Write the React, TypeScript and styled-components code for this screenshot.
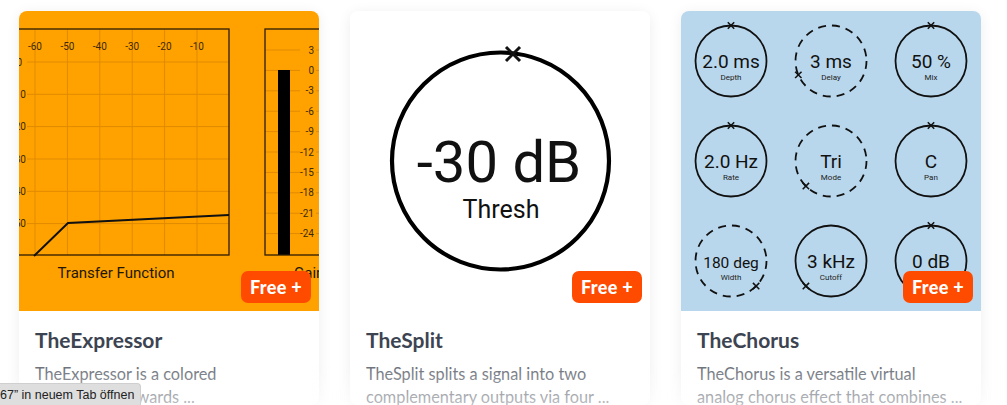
import React from 'react'
import styled, { createGlobalStyle } from 'styled-components'

const GlobalStyle = createGlobalStyle`
  body {
    margin: 0;
    background: #ffffff;
    font-family: 'Lato', 'Open Sans', sans-serif;
    overflow: hidden;
  }
`

const Page = styled.div`
  display: grid;
  grid-template-columns: repeat(3, 300px);
  column-gap: 31px;
  padding: 11px 0 0 19px;
  height: 405px;
  box-sizing: border-box;
`

const Card = styled.div`
  background: #fff;
  border-radius: 8px;
  overflow: hidden;
  box-shadow: 0 2px 14px rgba(0, 0, 0, 0.07);
`

const Artwork = styled.div<{ $bg: string }>`
  position: relative;
  height: 300px;
  background: ${p => p.$bg};

  svg {
    display: block;
  }
`

const Badge = styled.span`
  position: absolute;
  right: 8px;
  bottom: 8px;
  width: 70px;
  height: 32px;
  border-radius: 7px;
  background: #ff4b00;
  color: #fff;
  font-weight: 900;
  font-size: 18px;
  display: flex;
  align-items: center;
  justify-content: center;
  letter-spacing: 0.3px;
`

const Body = styled.div`
  padding: 15px 16px 0;
`

const Title = styled.h3`
  margin: 0;
  font-size: 21px;
  line-height: 28px;
  font-weight: 700;
  color: #3d4451;
`

const Desc = styled.p`
  margin: 8px 0 0;
  font-size: 16.3px;
  line-height: 23px;
  color: #6b7079;
  white-space: pre;
`

const StatusBubble = styled.div`
  position: fixed;
  left: 0;
  bottom: 0;
  height: 21px;
  padding: 0 6px 0 0;
  background: #dedede;
  border: 1px solid #cfcfcf;
  border-left: none;
  border-bottom: none;
  border-top-right-radius: 4px;
  font-family: 'Liberation Sans', Arial, sans-serif;
  font-size: 12.5px;
  color: #222;
  display: flex;
  align-items: center;
  white-space: nowrap;
`

const BottomFade = styled.div`
  position: fixed;
  left: 0;
  right: 0;
  bottom: 0;
  height: 40px;
  pointer-events: none;
  background: linear-gradient(to bottom, rgba(255, 255, 255, 0), rgba(255, 255, 255, 0.55));
`

/* svg text parts */
const AxisLabel = styled.text`
  font-family: Roboto, sans-serif;
  font-size: 10px;
  fill: #3d2900;
`

const ChartCaption = styled.text`
  font-family: Roboto, sans-serif;
  font-size: 15px;
  fill: #221700;
`

const BigValue = styled.text<{ $size: number }>`
  font-family: Roboto, sans-serif;
  font-size: ${p => p.$size}px;
  fill: #111;
`

const KnobLabel = styled.text`
  font-family: Roboto, sans-serif;
  font-size: 8px;
  fill: #222;
`

const Mark = ({ x, y, s, w }: { x: number; y: number; s: number; w: number }) => (
  <g stroke="#111" strokeWidth={w} strokeLinecap="butt">
    <line x1={x - s} y1={y - s} x2={x + s} y2={y + s} />
    <line x1={x - s} y1={y + s} x2={x + s} y2={y - s} />
  </g>
)

const ExpressorArt = () => {
  const cols = [16, 48.4, 80.8, 113.2, 145.6, 178]
  const rows = [51, 83.3, 115.6, 148, 180.3, 212.6]
  const colLabels = ['-60', '-50', '-40', '-30', '-20', '-10']
  const rowLabels = ['0', '-10', '-20', '-30', '-40', '-50']
  const meter = ['3', '0', '-3', '-6', '-9', '-12', '-15', '-18', '-21', '-24']

  return (
    <svg width="300" height="300" viewBox="0 0 300 300">
      {cols.map(x => (
        <line key={x} x1={x} y1={18} x2={x} y2={244} stroke="#e08a00" strokeWidth="1" />
      ))}
      {rows.map(y => (
        <line key={y} x1={8} y1={y} x2={210} y2={y} stroke="#e08a00" strokeWidth="1" />
      ))}
      {cols.map((x, i) => (
        <AxisLabel key={x} x={x} y={39} textAnchor="middle">{colLabels[i]}</AxisLabel>
      ))}
      {rows.map((y, i) => (
        <AxisLabel key={y} x={i === 0 ? 3 : 7} y={y + 3.5} textAnchor="end">{rowLabels[i]}</AxisLabel>
      ))}
      <rect x={-20} y={18} width={230} height={226} fill="none" stroke="#2b1d00" strokeWidth="1.3" />
      <polyline points="15,245 49,212 210,204" fill="none" stroke="#111" strokeWidth="2" />
      <ChartCaption x={97} y={267} textAnchor="middle">Transfer Function</ChartCaption>

      {meter.map((m, i) => {
        const y = 39 + i * 20.4
        return (
          <g key={m}>
            <line x1={246} y1={y} x2={281} y2={y} stroke="#e08a00" strokeWidth="1" />
            <line x1={297} y1={y} x2={305} y2={y} stroke="#e08a00" strokeWidth="1" />
            <AxisLabel x={295} y={y + 3.5} textAnchor="end">{m}</AxisLabel>
          </g>
        )
      })}
      <rect x={259} y={59} width={12} height={185} fill="#000" />
      <rect x={246} y={18} width={80} height={226} fill="none" stroke="#2b1d00" strokeWidth="1.3" />
      <ChartCaption x={275} y={267}>Gain</ChartCaption>
    </svg>
  )
}

const SplitArt = () => (
  <svg width="300" height="300" viewBox="0 0 300 300">
    <circle cx={150.5} cy={150} r={108.5} fill="none" stroke="#000" strokeWidth="4.2" />
    <Mark x={163} y={43} s={7} w={3} />
    <BigValue $size={58} x={149} y={171} textAnchor="middle">-30 dB</BigValue>
    <BigValue $size={25} x={151} y={207} textAnchor="middle">Thresh</BigValue>
  </svg>
)

type Knob = { v: string; l: string; a: number; dashed?: boolean; size?: number }

const knobs: Knob[] = [
  { v: '2.0 ms', l: 'Depth', a: 0 },
  { v: '3 ms', l: 'Delay', a: -113, dashed: true },
  { v: '50 %', l: 'Mix', a: 0 },
  { v: '2.0 Hz', l: 'Rate', a: 0 },
  { v: 'Tri', l: 'Mode', a: -135, dashed: true },
  { v: 'C', l: 'Pan', a: 0 },
  { v: '180 deg', l: 'Width', a: 135, dashed: true, size: 15.5 },
  { v: '3 kHz', l: 'Cutoff', a: -135 },
  { v: '0 dB', l: 'Gain', a: 0 },
]

const ChorusArt = () => (
  <svg width="300" height="300" viewBox="0 0 300 300">
    {knobs.map((k, i) => {
      const cx = 50 + (i % 3) * 100
      const cy = 50 + Math.floor(i / 3) * 100
      const r = 35.5
      const rad = (k.a * Math.PI) / 180
      return (
        <g key={k.l}>
          <circle
            cx={cx}
            cy={cy}
            r={r}
            fill="none"
            stroke="#111"
            strokeWidth="1.8"
            strokeDasharray={k.dashed ? '8 6' : undefined}
          />
          <Mark x={cx + r * Math.sin(rad)} y={cy - r * Math.cos(rad)} s={3.2} w={1.5} />
          <BigValue $size={k.size ?? 19} x={cx} y={cy + 7} textAnchor="middle">{k.v}</BigValue>
          <KnobLabel x={cx} y={cy + 19} textAnchor="middle">{k.l}</KnobLabel>
        </g>
      )
    })}
  </svg>
)

type Plugin = { name: string; text: string; bg: string; art: React.ReactNode }

const plugins: Plugin[] = [
  {
    name: 'TheExpressor',
    text: 'TheExpressor is a colored\ncompressor towards ...',
    bg: '#ffa200',
    art: <ExpressorArt />,
  },
  {
    name: 'TheSplit',
    text: 'TheSplit splits a signal into two\ncomplementary outputs via four ...',
    bg: '#ffffff',
    art: <SplitArt />,
  },
  {
    name: 'TheChorus',
    text: 'TheChorus is a versatile virtual\nanalog chorus effect that combines ...',
    bg: '#b9d7ec',
    art: <ChorusArt />,
  },
]

export default function App() {
  return (
    <>
      <GlobalStyle />
      <Page>
        {plugins.map(p => (
          <Card key={p.name}>
            <Artwork $bg={p.bg}>
              {p.art}
              <Badge>Free +</Badge>
            </Artwork>
            <Body>
              <Title>{p.name}</Title>
              <Desc>{p.text}</Desc>
            </Body>
          </Card>
        ))}
      </Page>
      <BottomFade />
      <StatusBubble>67” in neuem Tab öffnen</StatusBubble>
    </>
  )
}
